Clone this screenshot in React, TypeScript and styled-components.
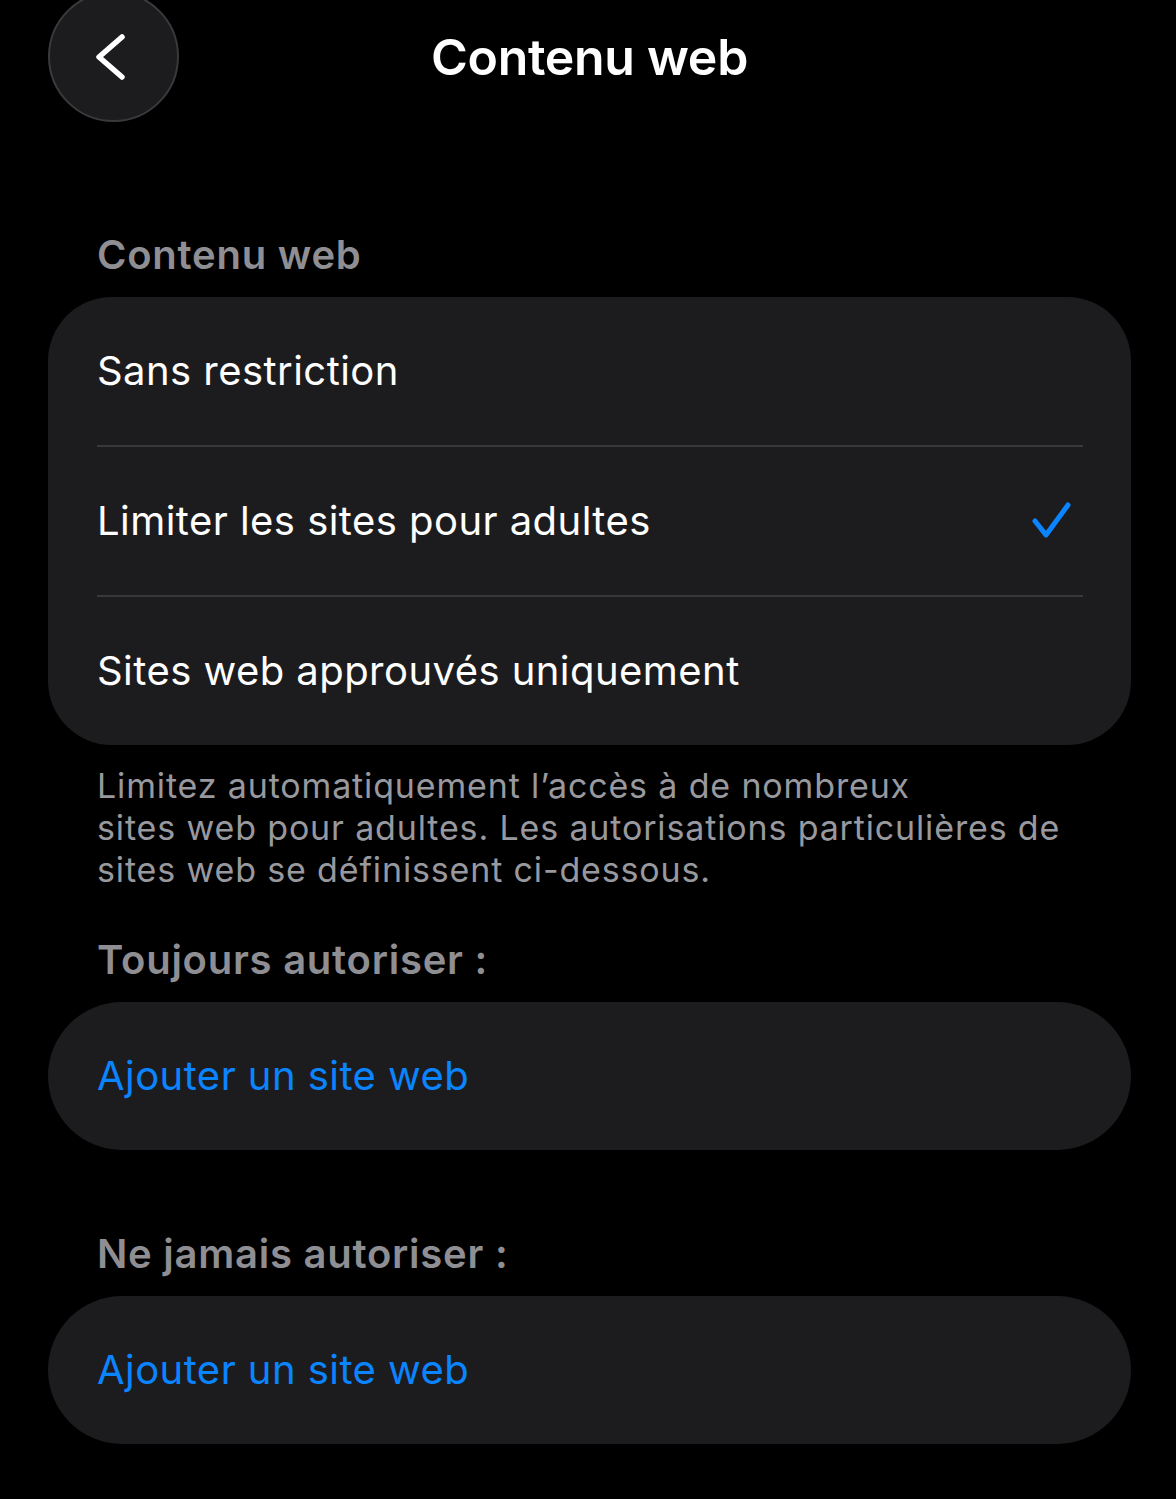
import React from "react";
import styled, { createGlobalStyle } from "styled-components";

const Global = createGlobalStyle`
  html, body { margin: 0; padding: 0; background: #000; }
  body { font-family: Inter, "Noto Sans", "Liberation Sans", sans-serif; -webkit-font-smoothing: antialiased; }
  * { box-sizing: border-box; }
`;

const Page = styled.div`
  width: 1176px;
  min-height: 1499px;
  background: #000;
  padding: 0 45px 0 48px;
  overflow: hidden;
`;

const Header = styled.header`
  height: 112px;
  display: grid;
  grid-template-columns: 130px 1fr 130px;
  align-items: center;
`;

const BackButton = styled.button`
  width: 131px;
  height: 131px;
  margin: -9px 0;
  border-radius: 50%;
  background: #1c1c1e;
  border: 2px solid #3a3a3c;
  padding: 0 8px 0 0;
  display: flex;
  align-items: center;
  justify-content: center;
  cursor: pointer;
`;

const Title = styled.h1`
  margin: 0;
  text-align: center;
  color: #fff;
  font-size: 50px;
  font-weight: 600;
  line-height: 60px;
  letter-spacing: -0.3px;
`;

const SectionTitle = styled.h2<{ $top: number }>`
  margin: ${(p) => p.$top}px 0 18px;
  padding-left: 49px;
  color: #8e8e93;
  font-size: 40px;
  font-weight: 600;
  line-height: 48px;
  letter-spacing: 0.75px;
`;

const Card = styled.div<{ $pill?: boolean }>`
  background: #1c1c1e;
  border-radius: ${(p) => (p.$pill ? "74px" : "64px")};
  padding: 0 48px 0 49px;
`;

const Row = styled.div`
  height: 150px;
  display: flex;
  align-items: center;
  justify-content: space-between;
  border-bottom: 2px solid #38383a;
  &:last-child { border-bottom: none; height: 148px; }
`;

const RowLabel = styled.span<{ $link?: boolean }>`
  color: ${(p) => (p.$link ? "#0a84ff" : "#fff")};
  font-size: 40px;
  font-weight: 400;
  line-height: 48px;
  letter-spacing: 0.45px;
`;

const CheckWrap = styled.span`
  display: flex;
  margin-right: 10px;
`;

const Footer = styled.p`
  margin: 20px 0 0;
  padding-left: 49px;
  color: #98989f;
  font-size: 34px;
  line-height: 42px;
  font-weight: 400;
  letter-spacing: 0.85px;
`;

const Check = () => (
  <CheckWrap>
    <svg width="44" height="44" viewBox="1030 500 44 44">
      <path d="M1036 522 L1047 536 L1069 506" fill="none" stroke="#0a84ff" strokeWidth="5" strokeLinecap="round" strokeLinejoin="round" />
    </svg>
  </CheckWrap>
);

const Chevron = () => (
  <svg width="40" height="56" viewBox="90 28 40 56">
    <path d="M122 36 L99 56 L122 76" fill="none" stroke="#fff" strokeWidth="5.5" strokeLinecap="round" strokeLinejoin="round" />
  </svg>
);

const options = [
  { label: "Sans restriction", checked: false },
  { label: "Limiter les sites pour adultes", checked: true },
  { label: "Sites web approuvés uniquement", checked: false },
];

export default function App() {
  return (
    <Page>
      <Global />
      <Header>
        <BackButton aria-label="Retour">
          <Chevron />
        </BackButton>
        <Title>Contenu web</Title>
        <span />
      </Header>

      <SectionTitle $top={119}>Contenu web</SectionTitle>
      <Card>
        {options.map((o) => (
          <Row key={o.label}>
            <RowLabel>{o.label}</RowLabel>
            {o.checked && <Check />}
          </Row>
        ))}
      </Card>
      <Footer>
        Limitez automatiquement l’accès à de nombreux
        <br />
        sites web pour adultes. Les autorisations particulières de
        <br />
        sites web se définissent ci-dessous.
      </Footer>

      <SectionTitle $top={45}>Toujours autoriser :</SectionTitle>
      <Card $pill>
        <Row>
          <RowLabel $link>Ajouter un site web</RowLabel>
        </Row>
      </Card>

      <SectionTitle $top={80}>Ne jamais autoriser :</SectionTitle>
      <Card $pill>
        <Row>
          <RowLabel $link>Ajouter un site web</RowLabel>
        </Row>
      </Card>
    </Page>
  );
}
